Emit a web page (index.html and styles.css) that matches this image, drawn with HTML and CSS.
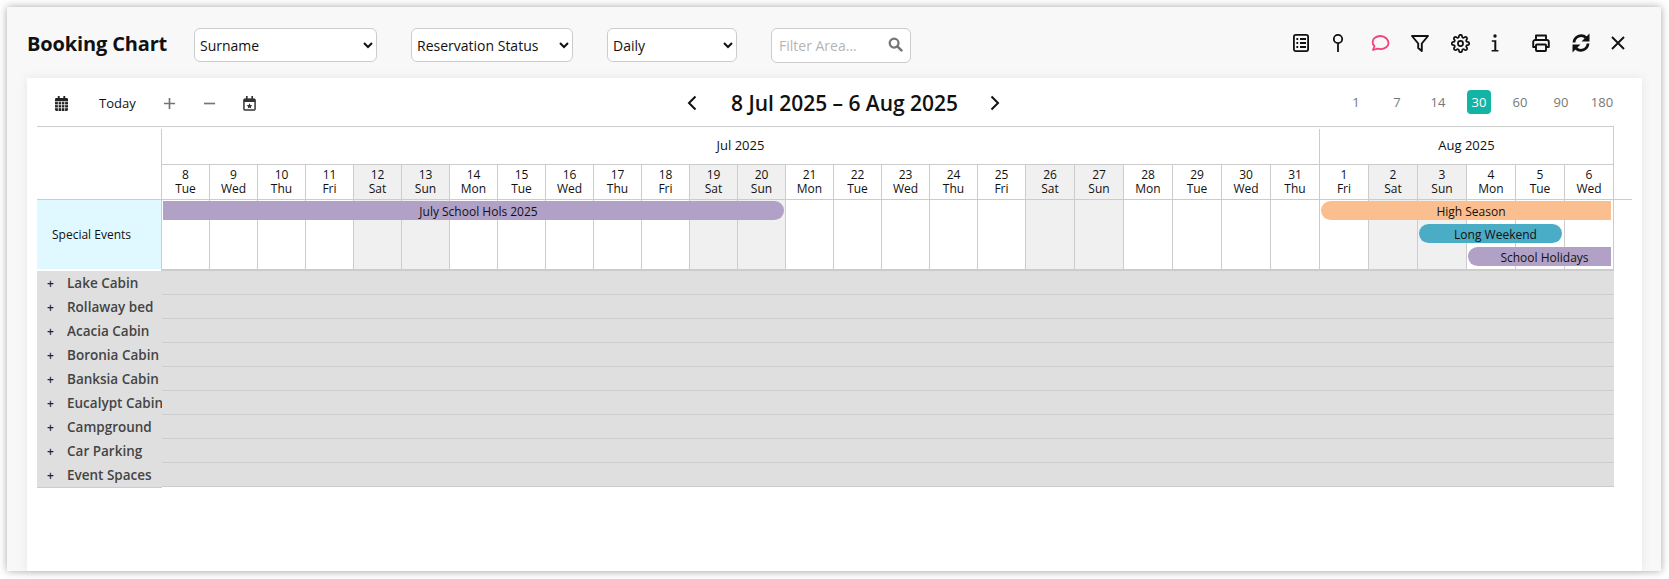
FILE: index.html
```html
<!DOCTYPE html>
<html lang="en">
<head>
<meta charset="utf-8">
<title>Booking Chart</title>
<link rel="stylesheet" href="styles.css">
</head>
<body>
<div class="window">
  <header class="topbar">
    <h1 class="title">Booking Chart</h1>
    <select class="pick pick-surname"><option>Surname</option></select>
    <select class="pick pick-status"><option>Reservation Status</option></select>
    <select class="pick pick-daily"><option>Daily</option></select>
    <div class="filter">
      <input class="filter-input" placeholder="Filter Area...">
      <svg class="filter-icon" viewBox="0 0 16 16" width="15" height="15"><circle cx="6.5" cy="6.5" r="4.7" fill="none" stroke="#757575" stroke-width="2.4"/><path d="M10 10l4.3 4.3" stroke="#757575" stroke-width="2.8" stroke-linecap="round"/></svg>
    </div>
    <nav class="actions">
      <svg class="act act-list" viewBox="0 0 18 20" width="18" height="20" fill="none" stroke="#111" stroke-width="1.8"><rect x="1.9" y="1.9" width="14.2" height="16.2" rx="1.8"/><path d="M8 6h6M8 10h6M8 14h6"/><path d="M4.4 6h1.8M4.4 10h1.8M4.4 14h1.8" stroke-width="2"/></svg>
      <svg class="act act-pin" viewBox="0 0 14 20" width="14" height="20" fill="none" stroke="#111" stroke-width="1.8"><circle cx="7" cy="6" r="4.2"/><path d="M7 10v9"/></svg>
      <svg class="act act-chat" viewBox="0 0 20 18" width="20" height="18" fill="none" stroke="#f5407a" stroke-width="1.8" stroke-linejoin="round"><path d="M10.5 2C6 2 2.6 4.6 2.6 8c0 1.6.7 3 1.9 4.1L3 16l4.6-1.300c.9.3 1.900.4 2.900.4 4.500 0 8-2.800 8-6.100S15 2 10.500 2z"/></svg>
      <svg class="act act-funnel" viewBox="0 0 20 20" width="20" height="20" fill="none" stroke="#111" stroke-width="1.9" stroke-linejoin="round"><path d="M2 3h16l-6.200 7.500V18l-3.600-3v-4.500z"/></svg>
      <svg class="act act-gear" viewBox="0 0 24 24" width="19" height="19" fill="none" stroke="#111" stroke-width="2.2"><circle cx="12" cy="12" r="3.200"/><path d="M19.400 15a1.650 1.650 0 0 0 .33 1.820l.06.06a2 2 0 0 1 0 2.830 2 2 0 0 1-2.830 0l-.06-.06a1.650 1.650 0 0 0-1.820-.33 1.650 1.650 0 0 0-1 1.510V21a2 2 0 0 1-2 2 2 2 0 0 1-2-2v-.09A1.650 1.650 0 0 0 9 19.400a1.650 1.650 0 0 0-1.820.33l-.06.06a2 2 0 0 1-2.830 0 2 2 0 0 1 0-2.830l.06-.06a1.650 1.650 0 0 0 .33-1.820 1.650 1.650 0 0 0-1.510-1H3a2 2 0 0 1-2-2 2 2 0 0 1 2-2h.09A1.650 1.650 0 0 0 4.600 9a1.650 1.650 0 0 0-.33-1.820l-.06-.06a2 2 0 0 1 0-2.830 2 2 0 0 1 2.830 0l.06.06a1.650 1.650 0 0 0 1.820.33H9a1.650 1.650 0 0 0 1-1.510V3a2 2 0 0 1 2-2 2 2 0 0 1 2 2v.09a1.650 1.650 0 0 0 1 1.510 1.650 1.650 0 0 0 1.820-.33l.06-.06a2 2 0 0 1 2.830 0 2 2 0 0 1 0 2.830l-.06.06a1.650 1.650 0 0 0-.33 1.820V9a1.650 1.650 0 0 0 1.510 1H21a2 2 0 0 1 2 2 2 2 0 0 1-2 2h-.09a1.650 1.650 0 0 0-1.510 1z"/></svg>
      <svg class="act act-info" viewBox="0 0 10 20" width="10" height="20" fill="#111"><circle cx="5" cy="3" r="1.700"/><path d="M1.800 7.200H6.300V17H8.400V18.600H1.600V17H4.300V8.800H1.800z"/></svg>
      <svg class="act act-print" viewBox="0 0 20 20" width="20" height="20" fill="none" stroke="#111" stroke-width="1.900" stroke-linejoin="round"><path d="M5 7V2.500h10V7"/><path d="M5 14H2.200V9a2 2 0 0 1 2-2h11.600a2 2 0 0 1 2 2v5H15"/><rect x="5" y="11.500" width="10" height="6.500" rx=".8"/></svg>
      <svg class="act act-sync" viewBox="0 0 20 20" width="20" height="20" fill="none"><path d="M3 9.500A7.200 7.200 0 0 1 15 4.600" stroke="#111" stroke-width="2.800"/><path d="M18.500 .5v8h-8z" fill="#111"/><path d="M17 10.500A7.200 7.200 0 0 1 5 15.400" stroke="#111" stroke-width="2.800"/><path d="M1.500 19.500v-8h8z" fill="#111"/></svg>
      <svg class="act act-close" viewBox="0 0 14 14" width="14" height="14" stroke="#111" stroke-width="1.900"><path d="M1 1l12 12M13 1L1 13"/></svg>
    </nav>
  </header>

  <main class="panel">
    <div class="toolbar">
      <div class="tools">
        <svg class="tool-month" viewBox="0 0 14 16" width="13" height="15"><path fill="#222" d="M3 0h2v2h4V0h2v2h1.500A1.500 1.500 0 0 1 14 3.500V14.500A1.500 1.500 0 0 1 12.500 16h-11A1.500 1.500 0 0 1 0 14.500V3.500A1.500 1.500 0 0 1 1.500 2H3z"/><path stroke="#fff" stroke-width=".8" d="M0 6h14M0 9.300h14M0 12.600h14M3.600 5.500V16M7 5.500V16M10.400 5.500V16"/></svg>
        <span class="today">Today</span>
        <svg class="tool-plus" viewBox="0 0 14 14" width="13" height="13" stroke="#757575" stroke-width="1.800"><path d="M7 1v12M1 7h12"/></svg>
        <svg class="tool-minus" viewBox="0 0 14 14" width="13" height="13" stroke="#757575" stroke-width="1.800"><path d="M1 7h12"/></svg>
        <svg class="tool-star" viewBox="0 0 14 16" width="13" height="15"><path fill="none" stroke="#333" stroke-width="1.600" d="M1 4.500A1 1 0 0 1 2 3.500H12A1 1 0 0 1 13 4.500V14A1 1 0 0 1 12 15H2A1 1 0 0 1 1 14z"/><path fill="#333" d="M1 3h12v3.500H1zM3.200 0H5V3H3.200zM9 0h1.800V3H9zM7 7.800l.9 1.900 2.100.3-1.500 1.400.4 2L7 12.400l-1.900 1 .4-2L4 10l2.100-.3z"/></svg>
      </div>
      <div class="range">
        <svg viewBox="0 0 10 16" width="10" height="16" fill="none" stroke="#111" stroke-width="2"><path d="M8.500 1.500L2 8l6.500 6.500"/></svg>
        <h2 class="range-text">8 Jul 2025 – 6 Aug 2025</h2>
        <svg viewBox="0 0 10 16" width="10" height="16" fill="none" stroke="#111" stroke-width="2"><path d="M1.500 1.500L8 8l-6.500 6.500"/></svg>
      </div>
      <div class="spans">
        <span class="span">1</span><span class="span">7</span><span class="span">14</span><span class="span span-on">30</span><span class="span">60</span><span class="span">90</span><span class="span">180</span>
      </div>
    </div>

    <section class="chart">
      <div class="head">
        <div class="months cols">
          <div class="month month-jul">Jul 2025</div>
          <div class="month month-aug">Aug 2025</div>
        </div>
        <div class="days cols">
          <div class="day">8<br>Tue</div><div class="day">9<br>Wed</div><div class="day">10<br>Thu</div><div class="day">11<br>Fri</div><div class="day off">12<br>Sat</div><div class="day off">13<br>Sun</div><div class="day">14<br>Mon</div><div class="day">15<br>Tue</div><div class="day">16<br>Wed</div><div class="day">17<br>Thu</div><div class="day">18<br>Fri</div><div class="day off">19<br>Sat</div><div class="day off">20<br>Sun</div><div class="day">21<br>Mon</div><div class="day">22<br>Tue</div><div class="day">23<br>Wed</div><div class="day">24<br>Thu</div><div class="day">25<br>Fri</div><div class="day off">26<br>Sat</div><div class="day off">27<br>Sun</div><div class="day">28<br>Mon</div><div class="day">29<br>Tue</div><div class="day">30<br>Wed</div><div class="day">31<br>Thu</div><div class="day">1<br>Fri</div><div class="day off">2<br>Sat</div><div class="day off">3<br>Sun</div><div class="day">4<br>Mon</div><div class="day">5<br>Tue</div><div class="day">6<br>Wed</div>
        </div>
      </div>

      <div class="special">
        <div class="special-name">Special Events</div>
        <div class="special-grid">
          <div class="slots">
            <div class="slot"></div><div class="slot"></div><div class="slot"></div><div class="slot"></div><div class="slot off"></div><div class="slot off"></div><div class="slot"></div><div class="slot"></div><div class="slot"></div><div class="slot"></div><div class="slot"></div><div class="slot off"></div><div class="slot off"></div><div class="slot"></div><div class="slot"></div><div class="slot"></div><div class="slot"></div><div class="slot"></div><div class="slot off"></div><div class="slot off"></div><div class="slot"></div><div class="slot"></div><div class="slot"></div><div class="slot"></div><div class="slot"></div><div class="slot off"></div><div class="slot off"></div><div class="slot"></div><div class="slot"></div><div class="slot"></div>
          </div>
          <div class="events">
            <div class="event ev-july">July School Hols 2025</div>
            <div class="event ev-high">High Season</div>
            <div class="event ev-long">Long Weekend</div>
            <div class="event ev-school">School Holidays</div>
          </div>
        </div>
      </div>

      <div class="resources">
        <div class="res-names">
          <div class="res-name"><span class="res-plus">+</span>Lake Cabin</div>
          <div class="res-name"><span class="res-plus">+</span>Rollaway bed</div>
          <div class="res-name"><span class="res-plus">+</span>Acacia Cabin</div>
          <div class="res-name"><span class="res-plus">+</span>Boronia Cabin</div>
          <div class="res-name"><span class="res-plus">+</span>Banksia Cabin</div>
          <div class="res-name"><span class="res-plus">+</span>Eucalypt Cabin</div>
          <div class="res-name"><span class="res-plus">+</span>Campground</div>
          <div class="res-name"><span class="res-plus">+</span>Car Parking</div>
          <div class="res-name"><span class="res-plus">+</span>Event Spaces</div>
        </div>
        <div class="res-rows">
          <div class="res-row"></div><div class="res-row"></div><div class="res-row"></div><div class="res-row"></div><div class="res-row"></div><div class="res-row"></div><div class="res-row"></div><div class="res-row"></div><div class="res-row"></div>
        </div>
      </div>
    </section>
  </main>
</div>
</body>
</html>
```
FILE: styles.css
```css
* { box-sizing: border-box; }
html, body { height: 100%; }
body {
  margin: 0;
  background: #fff;
  font-family: "Open Sans", "Noto Sans", sans-serif;
  color: #111;
  overflow: hidden;
}
.window {
  margin: 7px 8px 0 7px;
  height: 564px;
  background: #f8f8f8;
  box-shadow: 0 0 8px rgba(0, 0, 0, .35);
  display: flex;
  flex-direction: column;
}
.topbar {
  height: 71px;
  flex: none;
  display: flex;
  align-items: flex-start;
  padding: 21px 0 0 21px;
}
.title {
  margin: 1px 0 0 -1px;
  width: 167px;
  font-size: 20px;
  font-weight: 700;
  line-height: 30px;
  letter-spacing: -.15px;
  color: #111;
}
.pick {
  height: 34px;
  border: 1px solid #ccc;
  border-radius: 6px;
  background: #fff;
  font: 14px "Open Sans", sans-serif;
  color: #111;
  padding: 0 0 0 1px;
}
.pick-surname { width: 183px; margin-right: 34px; }
.pick-status { width: 162px; margin-right: 34px; }
.pick-daily { width: 130px; margin-right: 34px; }
.filter {
  width: 140px;
  height: 35px;
  background: #fff;
  border: 1px solid #ccc;
  border-radius: 6px;
  display: flex;
  align-items: center;
  padding: 0 7px;
}
.filter-input {
  border: 0;
  outline: 0;
  width: 100px;
  padding: 0;
  font: 14px "Open Sans", sans-serif;
  background: transparent;
  flex: 1;
  min-width: 0;
}
.filter-input::placeholder { color: #b5b5b5; opacity: 1; }
.filter-icon { flex: none; margin-top: -3px; }
.actions {
  margin-left: auto;
  display: flex;
  align-items: center;
  height: 30px;
  padding-right: 36px;
}
.act { display: block; flex: none; }
.act-pin { margin-left: 21px; }
.act-chat { margin-left: 25px; }
.act-funnel { margin-left: 20px; }
.act-gear { margin-left: 21px; }
.act-info { margin-left: 20px; }
.act-print { margin-left: 31px; }
.act-sync { margin-left: 20px; }
.act-close { margin-left: 20px; }

.panel {
  flex: 1;
  margin: 0 19px 0 20px;
  background: #fff;
  box-shadow: 0 0 10px rgba(0, 0, 0, .08);
  padding: 0 10px;
  min-height: 0;
}
.toolbar {
  height: 48px;
  display: flex;
  align-items: center;
  width: 1577px;
}
.tools {
  width: 534px;
  display: flex;
  align-items: center;
  padding: 2px 0 0 18px;
  flex: none;
}
.today { font-size: 13px; margin: 0 0 0 31px; width: 36px; }
.tool-plus { margin-left: 28px; }
.tool-minus { margin-left: 27px; }
.tool-star { margin-left: 27px; }
.range {
  display: flex;
  align-items: center;
  flex: none;
  margin-left: 116px;
  padding-top: 2px;
}
.range-text {
  margin: 0 32px 0 34px;
  font-size: 21px;
  font-weight: 600;
  line-height: 26px;
  letter-spacing: -.03px;
  white-space: nowrap;
  color: #111;
}
.spans {
  margin-left: auto;
  display: flex;
  align-items: center;
  gap: 17px;
}
.span {
  width: 24px;
  height: 24px;
  border-radius: 4px;
  font-size: 13px;
  color: #777;
  display: flex;
  align-items: center;
  justify-content: center;
}
.span-on { background: #12b5a5; color: #fff; }

.head { border-bottom: 1px solid #ccc; width: 1595px; }
.cols {
  display: grid;
  width: 1577px;
  padding-left: 125px;
  grid-template-columns: repeat(18, 48px) repeat(12, 49px);
}
.months { border-top: 1px solid #ccc; height: 39px; }
.days { height: 34px; }
.month {
  font-size: 13px;
  text-align: center;
  border-right: 1px solid #ccc;
  border-bottom: 1px solid #ccc;
  line-height: 36px;
}
.month-jul {
  grid-column: 1 / 25;
  border-left: 1px solid #ccc;
  margin-left: -1px;
  margin-top: 2px;
  line-height: 32px;
}
.month-aug { grid-column: 25 / 31; }
.day {
  border-right: 1px solid #ccc;
  font-size: 12px;
  line-height: 14px;
  padding-top: 3px;
  text-align: center;
  white-space: nowrap;
}
.day:first-child { border-left: 1px solid #ccc; margin-left: -1px; }
.off { background: #f0f0f0; }

.special { display: flex; height: 71px; width: 1577px; }
.special-name {
  width: 124px;
  height: 69px;
  flex: none;
  background: #e0f8ff;
  font-size: 12px;
  display: flex;
  align-items: center;
  padding-left: 15px;
}
.special-grid {
  display: grid;
  flex: none;
  height: 71px;
  border-left: 1px solid #ccc;
  border-bottom: 2px solid #ccc;
}
.slots, .events {
  grid-area: 1 / 1;
  display: grid;
  grid-template-columns: repeat(18, 48px) repeat(12, 49px);
}
.slot { border-right: 1px solid #ccc; }
.slot.off { background: #f0f0f0; }
.events {
  grid-template-rows: 19px 19px 19px;
  row-gap: 4px;
  padding-top: 1px;
}
.event {
  font-size: 12px;
  line-height: 21px;
  text-align: center;
  padding-left: 10px;
  white-space: nowrap;
  color: #111;
}
.ev-july {
  grid-column: 1 / 14;
  grid-row: 1;
  background: #b1a1c6;
  border-radius: 0 9.5px 9.5px 0;
  margin: 0 2px 0 1px;
}
.ev-high {
  grid-column: 25 / 31;
  grid-row: 1;
  background: #fbbf8f;
  border-radius: 9.5px 0 0 9.5px;
  margin: 0 3px 0 1px;
}
.ev-long {
  grid-column: 27 / 30;
  grid-row: 2;
  background: #4bacc6;
  border-radius: 9.5px;
  margin: 0 3px 0 1px;
}
.ev-school {
  grid-column: 28 / 31;
  grid-row: 3;
  background: #b1a1c6;
  border-radius: 9.5px 0 0 9.5px;
  margin: 0 3px 0 1px;
}

.resources { display: flex; width: 1577px; }
.res-names {
  width: 125px;
  flex: none;
  background: #dfdfdf;
  border-bottom: 1px solid #ccc;
  height: 217px;
}
.res-name {
  height: 24px;
  display: flex;
  align-items: center;
  font-size: 13.5px;
  font-weight: 600;
  color: #444;
  white-space: nowrap;
  padding-left: 10px;
}
.res-plus {
  width: 20px;
  flex: none;
  font-size: 12px;
  color: #222;
}
.res-rows { flex: 1; }
.res-row { height: 24px; background: #dfdfdf; border-bottom: 1px solid #ccc; }
```
